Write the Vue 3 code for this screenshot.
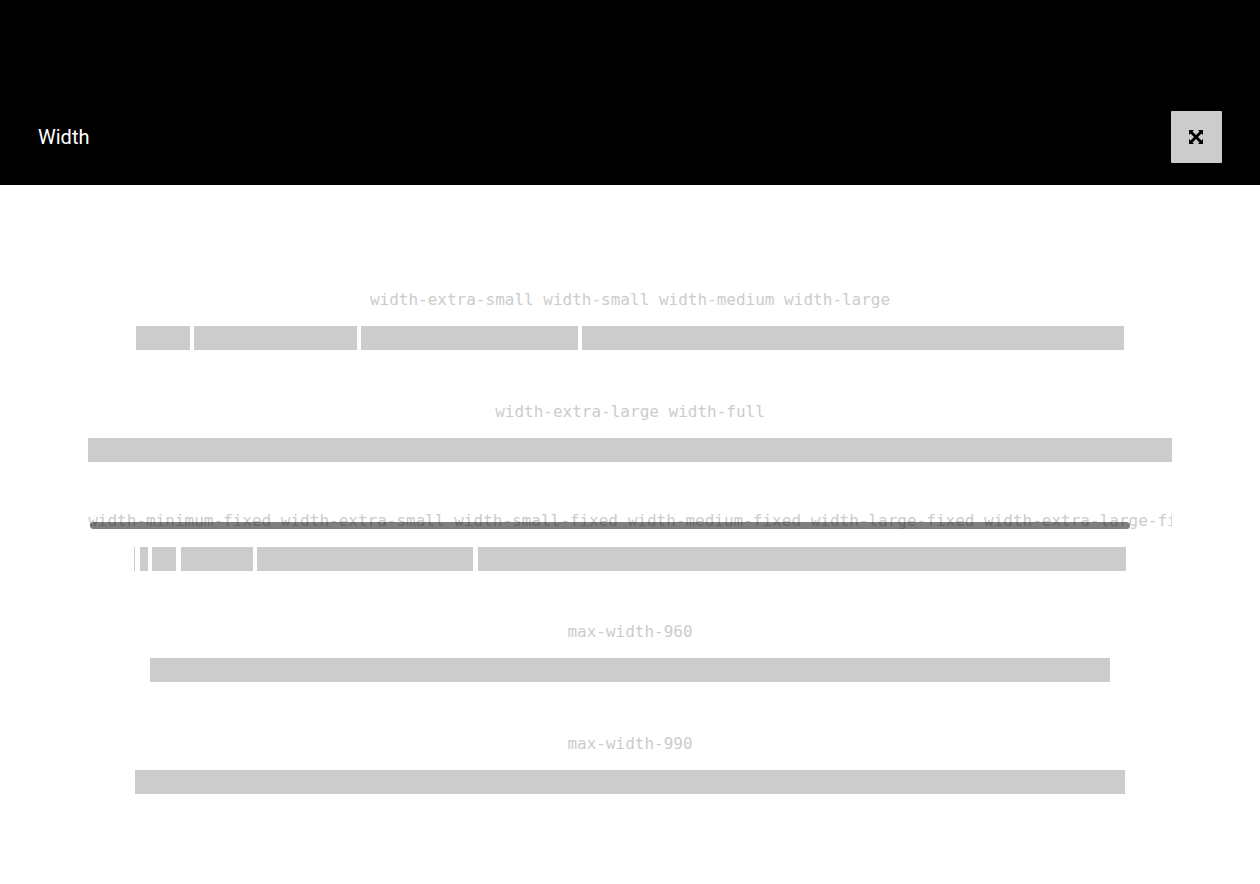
<script setup>
const percentBars = ['extra-small', 'small', 'medium', 'large']
const fixedBars = ['fixed-minimum', 'fixed-extra-small', 'fixed-small', 'fixed-medium', 'fixed-large', 'fixed-extra-large']
</script>

<template>
  <div class="page">
    <header class="header">
      <h1 class="title">Width</h1>
      <button class="expand" type="button" aria-label="Expand">
        <svg viewBox="0 0 15 14" width="15" height="14" aria-hidden="true">
          <path d="M0 0h5L3.500 1.500 7 5l3.500-3.500L9 0h5v5l-1.500-1.500L9 7l3.500 3.500L14 9v5H9l1.500-1.500L7 9l-3.500 3.500L5 14H0V9l1.500 1.500L5 7 1.500 3.500 0 5z" />
        </svg>
      </button>
    </header>

    <main class="content">
      <section class="example">
        <code class="label">width-extra-small width-small width-medium width-large</code>
        <div class="bars">
          <template v-for="name in percentBars" :key="name"><span class="bar" :class="name"></span>{{ ' ' }}</template>
        </div>
      </section>

      <section class="example">
        <code class="label">width-extra-large width-full</code>
        <div class="bars"><span class="bar full"></span></div>
      </section>

      <section class="example scrolling">
        <div class="scroller">
          <code class="label">width-minimum-fixed width-extra-small width-small-fixed width-medium-fixed width-large-fixed width-extra-large-fixed</code>
          <span class="thumb"></span>
        </div>
        <div class="bars">
          <template v-for="name in fixedBars" :key="name"><span class="bar" :class="name"></span>{{ ' ' }}</template>
        </div>
      </section>

      <section class="example after-scroller">
        <code class="label">max-width-960</code>
        <div class="bars"><span class="bar full max-960"></span></div>
      </section>

      <section class="example">
        <code class="label">max-width-990</code>
        <div class="bars"><span class="bar full max-990"></span></div>
      </section>
    </main>
  </div>
</template>

<style>
body {
  margin: 0;
  background: #fff;
}
</style>

<style scoped>
.page {
  font-family: "Liberation Sans", Arial, sans-serif;
  font-size: 16px;
}

.header {
  display: flex;
  align-items: center;
  justify-content: space-between;
  padding: 111px 38px 22px;
  background: #000;
}

.title {
  margin: 0;
  color: #fff;
  font-family: Roboto, sans-serif;
  font-size: 20px;
  font-weight: 400;
  line-height: 32px;
}

.expand {
  display: flex;
  align-items: center;
  justify-content: center;
  width: 51px;
  height: 52px;
  padding: 0;
  border: 0;
  border-radius: 1px;
  background: #ccc;
  color: #000;
}

.expand svg {
  display: block;
  fill: currentColor;
}

.content {
  padding: 103px 7% 90px;
}

.example + .example {
  margin-top: 50px;
}

.example + .scrolling {
  margin-top: 47px;
}

.example + .after-scroller {
  margin-top: 49px;
}

.label {
  display: block;
  margin-bottom: 14px;
  color: #ccc;
  font-family: "DejaVu Sans Mono", Menlo, monospace;
  font-size: 16px;
  line-height: 24px;
  text-align: center;
  white-space: nowrap;
}

.scroller {
  position: relative;
  overflow-x: auto;
  scrollbar-width: none;
}

.scroller .label {
  text-align: left;
}

.thumb {
  position: absolute;
  left: 2px;
  top: 13px;
  width: 96%;
  height: 7px;
  border-radius: 4px;
  background: rgba(0, 0, 0, 0.5);
}

.bars {
  line-height: 24px;
  text-align: center;
  white-space: nowrap;
}

.bar {
  display: inline-block;
  height: 24px;
  background: #ccc;
  vertical-align: top;
}

.extra-small { width: 5%; }
.small { width: 15%; }
.medium { width: 20%; }
.large { width: 50%; }
.full { width: 100%; }
.max-960 { max-width: 960px; }
.max-990 { max-width: 990px; }
.fixed-minimum { width: 1px; }
.fixed-extra-small { width: 8px; }
.fixed-small { width: 24px; }
.fixed-medium { width: 72px; }
.fixed-large { width: 216px; }
.fixed-extra-large { width: 648px; }
</style>
